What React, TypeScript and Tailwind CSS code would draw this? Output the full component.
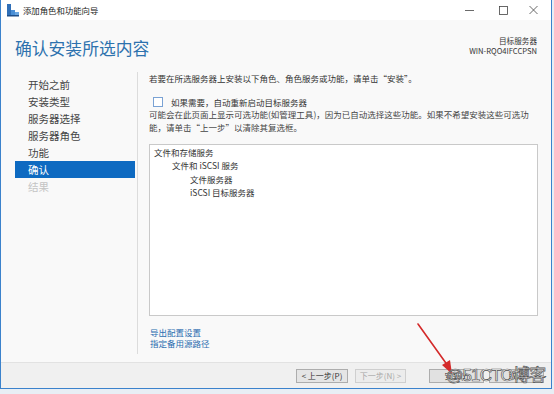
export default function App() {
  const navItems = ["开始之前", "安装类型", "服务器选择", "服务器角色", "功能", "确认", "结果"];

  return (
    <div className="relative w-[554px] h-[394px] bg-[#e8eef5] overflow-hidden font-['Noto_Sans_CJK_SC','Noto_Sans',sans-serif] text-[#333]">
      {/* window */}
      <div className="flex flex-col w-[552px] h-[389px] border-l border-r border-b border-[#3b82cc] bg-[#f9f9f9]">
        {/* title bar */}
        <div className="flex items-center h-[20px] bg-white shrink-0">
          <svg className="ml-[5px] w-[14px] h-[14px]" viewBox="0 0 14 14">
            <rect x="1" y="1" width="4" height="11" fill="#2f6fb8" />
            <rect x="5" y="7" width="4" height="5" fill="#4a8fd6" />
            <rect x="9" y="9" width="4" height="3" fill="#6aa6e0" />
            <rect x="1" y="12" width="12" height="1.5" fill="#1e4f8a" />
          </svg>
          <span className="ml-[3px] text-[8.4px] leading-none text-[#222]">添加角色和功能向导</span>
          <div className="ml-auto flex items-center h-full">
            <svg className="w-[30px] h-[20px]" viewBox="0 0 30 20">
              <line x1="10" y1="10.5" x2="19" y2="10.5" stroke="#444" strokeWidth="0.8" />
            </svg>
            <svg className="w-[30px] h-[20px] ml-[4px]" viewBox="0 0 30 20">
              <rect x="10.5" y="6.5" width="8" height="8" fill="none" stroke="#444" strokeWidth="0.8" />
            </svg>
            <svg className="w-[30px] h-[20px] mr-[2px]" viewBox="0 0 30 20">
              <path d="M10.5 6 L18.5 14 M18.5 6 L10.5 14" stroke="#444" strokeWidth="0.8" />
            </svg>
          </div>
        </div>

        {/* header */}
        <div className="flex items-start h-[42px] shrink-0">
          <h1 className="ml-[14px] mt-[17px] text-[16.8px] leading-[22px] text-[#2d72ae] font-normal">确认安装所选内容</h1>
          <div className="ml-auto mr-[14px] mt-[16px] flex flex-col items-end text-[7.6px] leading-[10px] text-[#333]">
            <span>目标服务器</span>
            <span>WIN-RQO4IFCCPSN</span>
          </div>
        </div>

        {/* main */}
        <div className="flex flex-1 min-h-0">
          {/* nav */}
          <div className="flex flex-col w-[120px] ml-[14px] pt-[14px] shrink-0">
            {navItems.map((item) => (
              <div
                key={item}
                className={
                  item === "确认"
                    ? "h-[17px] flex items-center pl-[13px] text-[10.5px] bg-[#0e6ac1] text-white"
                    : item === "结果"
                    ? "h-[17px] flex items-center pl-[13px] text-[10.5px] text-[#c4c4c4]"
                    : "h-[17px] flex items-center pl-[13px] text-[10.5px] text-[#444]"
                }
              >
                {item}
              </div>
            ))}
          </div>

          {/* separator */}
          <div className="w-px bg-[#dcdcdc] ml-[2px] mt-[10px] mb-[8px] shrink-0" />

          {/* content */}
          <div className="flex flex-col flex-1 pl-[11px] pr-[13px] text-[8.5px]">
            <p className="mt-[10px] leading-[12px] text-[#333]">
              若要在所选服务器上安装以下角色、角色服务或功能，请单击“安装”。
            </p>
            <label className="mt-[13px] h-[10px] flex items-center">
              <span className="ml-[4px] w-[10px] h-[10px] border border-[#7aa2d4] bg-white" />
              <span className="ml-[8px] text-[#333]">如果需要，自动重新启动目标服务器</span>
            </label>
            <p className="mt-[1px] leading-[13px] text-[#444]">
              可能会在此页面上显示可选功能(如管理工具)，因为已自动选择这些功能。如果不希望安装这些可选功能，请单击“上一步”以清除其复选框。
            </p>

            <div className="mt-[10px] h-[172px] border border-[#c9c9c9] bg-white pt-[1px] pl-[4px] leading-[13.3px] text-[#333]">
              <div>文件和存储服务</div>
              <div className="pl-[18px]">文件和 iSCSI 服务</div>
              <div className="pl-[36px]">文件服务器</div>
              <div className="pl-[36px]">iSCSI 目标服务器</div>
            </div>

            <div className="mt-[11px] flex flex-col pl-[1px] leading-[10.5px] text-[#2a6db0]">
              <span>导出配置设置</span>
              <span>指定备用源路径</span>
            </div>
          </div>
        </div>

        {/* footer */}
        <div className="flex items-center justify-end h-[26px] shrink-0 border-t border-[#e2e2e2] bg-[#f0f0f0] pr-[7px] text-[8px]">
          <button className="w-[52px] h-[14px] flex items-center justify-center border border-[#adadad] bg-[#e5e5e5] text-[#333]">
            &lt; 上一步(P)
          </button>
          <button className="ml-[7px] w-[51px] h-[14px] flex items-center justify-center border border-[#cfcfcf] bg-[#ececec] text-[#a8a8a8]">
            下一步(N) &gt;
          </button>
          <button className="ml-[23px] w-[55px] h-[14px] flex items-center justify-center border border-[#adadad] bg-[#e1e1e1] text-[#333]">
            安装(I)
          </button>
          <button className="ml-[5px] w-[55px] h-[14px] flex items-center justify-center border border-[#adadad] bg-[#e1e1e1] text-[#333]">
            取消
          </button>
        </div>
      </div>

      {/* red arrow annotation */}
      <svg className="absolute left-[410px] top-[318px] w-[50px] h-[62px]" viewBox="0 0 50 62">
        <line x1="8" y1="6" x2="38" y2="48" stroke="#d42a2a" strokeWidth="1.6" strokeLinecap="round" />
        <polygon points="42,56 32,47 40,42" fill="#d42a2a" />
      </svg>

      {/* watermark */}
      <div className="absolute left-[446px] top-[366px] text-[17px] leading-[20px] tracking-[-0.8px] text-white font-['Liberation_Sans','Noto_Sans_CJK_SC',sans-serif] [-webkit-text-stroke:0.7px_#555]">
        @51CTO博客
      </div>
    </div>
  );
}
